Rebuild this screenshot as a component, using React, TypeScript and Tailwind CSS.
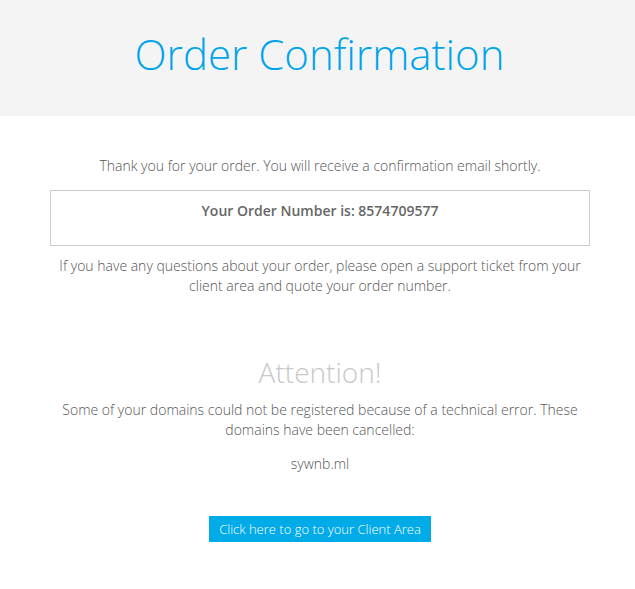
export default function App() {
  return (
    <div className="min-h-[589px] bg-white" style={{ fontFamily: '"Open Sans", "Liberation Sans", sans-serif' }}>
      <div className="h-[116px] bg-[#f4f4f4] flex items-center justify-center">
        <h1 className="text-[42px] font-light text-[#00a4ea] leading-none -mt-[8px] ml-[4px]">Order Confirmation</h1>
      </div>
      <div className="pl-[50px] pr-[45px] pt-[40px] text-center font-light text-[14px] text-[#555] leading-[20px]">
        <p className="mb-[14px]">Thank you for your order. You will receive a confirmation email shortly.</p>
        <div className="border border-[#ccc] h-[56px] pt-[10px]">
          <p className="font-semibold text-[#666]">Your Order Number is: 8574709577</p>
        </div>
        <p className="mt-[10px]">If you have any questions about your order, please open a support ticket from your client area and quote your order number.</p>
        <h2 className="mt-[56px] text-[28px] font-light text-[#c8c8c8] leading-[40px]">Attention!</h2>
        <p className="mt-[8px]">Some of your domains could not be registered because of a technical error. These domains have been cancelled:</p>
        <p className="mt-[14px]">sywnb.ml</p>
        <div className="mt-[42px] flex justify-center">
          <a className="bg-[#00abe8] text-white text-[13px] h-[26px] px-[10px] leading-[26px] inline-block">Click here to go to your Client Area</a>
        </div>
      </div>
    </div>
  );
}
